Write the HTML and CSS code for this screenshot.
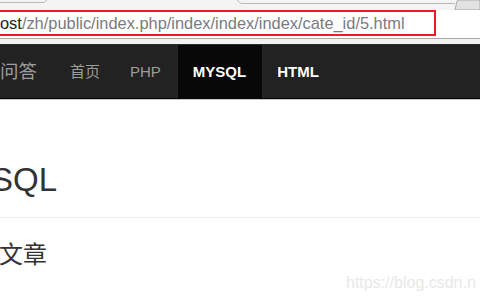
FILE: index.html
```html
<!DOCTYPE html>
<html lang="zh">
  <head>
    <meta charset="UTF-8" />
    <title>MySQL</title>
    <link rel="stylesheet" href="styles.css">
  </head>
  <body>
    <div class="chrome">
      <div class="tabs">
        <svg width="480" height="10" viewBox="0 0 480 10">
          <path d="M0 2.5 H44 L47 0" fill="none" stroke="#b9b9b9" />
          <path d="M237 0 L241 3.5 H455" fill="none" stroke="#b9b9b9" />
          <path d="M455 10 L457 1 Q458 0 460 0 H480 V10 Z" fill="#e2e2e2" stroke="#a9a9a9" />
        </svg>
      </div>
      <div class="toolbar">
        <div class="omnibox">
          <span class="host">ost</span><span class="path">/zh/public/index.php/index/index/index/cate_id/5.html</span>
        </div>
      </div>
    </div>
    <div class="navbar">
      <span class="brand">问答</span>
      <ul class="nav">
        <li><a href="#">首页</a></li>
        <li><a href="#">PHP</a></li>
        <li class="active"><a href="#">MYSQL</a></li>
        <li class="hover"><a href="#">HTML</a></li>
      </ul>
    </div>
    <div class="content">
      <h1 class="title">SQL</h1>
      <h2 class="sub">文章</h2>
      <div class="mark">https://blog.csdn.n</div>
    </div>
  </body>
</html>
```

FILE: styles.css
```css
* {
  box-sizing: border-box;
}
body {
  margin: 0;
  width: 480px;
  height: 300px;
  overflow: hidden;
  background: #fff;
  font-family: "Liberation Sans", Arial, "Noto Sans CJK SC", sans-serif;
  color: #333;
}
.chrome {
  height: 45px;
  background: #f2f2f2;
  border-bottom: 1px solid #2a2a2a;
}
.tabs {
  height: 10px;
  background: #f4f4f4;
}
.tabs svg {
  display: block;
}
.toolbar {
  height: 29px;
  background: #fff;
  border-bottom: 1px solid #a8a8a8;
}
.omnibox {
  width: 436px;
  height: 26px;
  border: 2px solid #ec1c24;
  border-left: none;
  font-size: 16.4px;
  line-height: 23px;
  white-space: nowrap;
  overflow: hidden;
}
.host {
  color: #222;
}
.path {
  color: #7a7a82;
}
.navbar {
  height: 54px;
  background: #222;
  border-bottom: 1px solid #080808;
  box-shadow: 0 1px 0 #c4c4c4;
  display: flex;
  align-items: stretch;
}
.brand {
  color: #9d9d9d;
  font-size: 18.5px;
  line-height: 54px;
  width: 55px;
}
.nav {
  list-style: none;
  margin: 0;
  padding: 0;
  display: flex;
}
.nav li a {
  display: block;
  padding: 0 15px;
  line-height: 54px;
  font-size: 15px;
  color: #9d9d9d;
  text-decoration: none;
}
.nav li:nth-child(2) a {
  padding-right: 17px;
}
.nav li.active a {
  background: #080808;
  color: #fff;
  font-weight: bold;
  padding: 0 16px 0 15px;
}
.nav li.hover a {
  color: #fff;
  font-weight: bold;
}
.content {
  position: relative;
  height: 200px;
}
.title {
  margin: 0 0 0 -9px;
  padding: 61px 0 0 0;
  font-size: 33px;
  font-weight: normal;
  line-height: 40px;
  height: 119px;
  border-bottom: 1px solid #eee;
}
.sub {
  margin: 0 0 0 -1px;
  padding-top: 23px;
  font-size: 24px;
  font-weight: normal;
  line-height: 28px;
}
.mark {
  position: absolute;
  left: 346px;
  top: 175px;
  font-size: 16px;
  color: #e8e8e8;
  white-space: nowrap;
}
```
